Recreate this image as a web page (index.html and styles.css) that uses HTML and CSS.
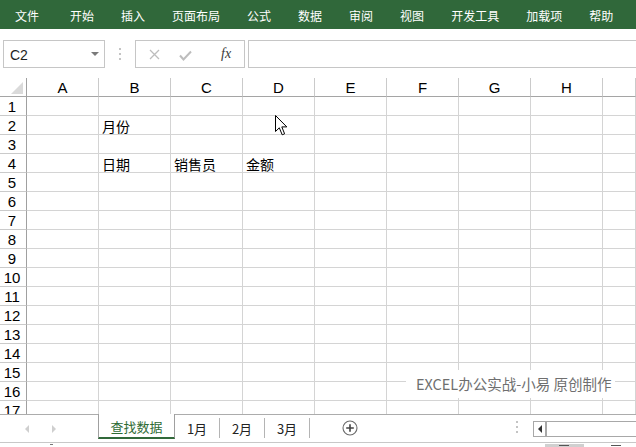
FILE: index.html
```html
<!DOCTYPE html>
<html lang="zh-CN">
<head>
<meta charset="utf-8">
<title>Excel</title>
<link rel="stylesheet" href="styles.css">
</head>
<body>
<div class="app">
  <nav class="ribbon">
    <span>文件</span><span>开始</span><span>插入</span><span>页面布局</span><span>公式</span><span>数据</span><span>审阅</span><span>视图</span><span>开发工具</span><span>加载项</span><span>帮助</span>
  </nav>

  <div class="fbar">
    <div class="namebox"><span>C2</span><span class="caret"></span></div>
    <div class="vdots"><i></i><i></i><i></i></div>
    <div class="fnbox">
      <svg class="x-ico" width="11" height="11" viewBox="0 0 11 11"><path d="M1 1L10 10M10 1L1 10" stroke="#bdbdbd" stroke-width="1.3" fill="none"/></svg>
      <svg class="ok-ico" width="13" height="11" viewBox="0 0 13 11"><path d="M1 5.5L4.5 9.5L12 1.5" stroke="#bdbdbd" stroke-width="2" fill="none"/></svg>
      <span class="fx">fx</span>
    </div>
    <div class="finput"></div>
  </div>

  <div class="sheet">
    <div class="grid">
      <span class="corner"><i></i></span><span class="ch">A</span><span class="ch">B</span><span class="ch">C</span><span class="ch">D</span><span class="ch">E</span><span class="ch">F</span><span class="ch">G</span><span class="ch">H</span><span class="ch"></span>
      <span class="rn">1</span><span></span><span></span><span></span><span></span><span></span><span></span><span></span><span></span><span></span>
      <span class="rn">2</span><span></span><span>月份</span><span></span><span></span><span></span><span></span><span></span><span></span><span></span>
      <span class="rn">3</span><span></span><span></span><span></span><span></span><span></span><span></span><span></span><span></span><span></span>
      <span class="rn">4</span><span></span><span>日期</span><span>销售员</span><span>金额</span><span></span><span></span><span></span><span></span><span></span>
      <span class="rn">5</span><span></span><span></span><span></span><span></span><span></span><span></span><span></span><span></span><span></span>
      <span class="rn">6</span><span></span><span></span><span></span><span></span><span></span><span></span><span></span><span></span><span></span>
      <span class="rn">7</span><span></span><span></span><span></span><span></span><span></span><span></span><span></span><span></span><span></span>
      <span class="rn">8</span><span></span><span></span><span></span><span></span><span></span><span></span><span></span><span></span><span></span>
      <span class="rn">9</span><span></span><span></span><span></span><span></span><span></span><span></span><span></span><span></span><span></span>
      <span class="rn">10</span><span></span><span></span><span></span><span></span><span></span><span></span><span></span><span></span><span></span>
      <span class="rn">11</span><span></span><span></span><span></span><span></span><span></span><span></span><span></span><span></span><span></span>
      <span class="rn">12</span><span></span><span></span><span></span><span></span><span></span><span></span><span></span><span></span><span></span>
      <span class="rn">13</span><span></span><span></span><span></span><span></span><span></span><span></span><span></span><span></span><span></span>
      <span class="rn">14</span><span></span><span></span><span></span><span></span><span></span><span></span><span></span><span></span><span></span>
      <span class="rn">15</span><span></span><span></span><span></span><span></span><span></span><span></span><span></span><span></span><span></span>
      <span class="rn">16</span><span></span><span></span><span></span><span></span><span></span><span></span><span></span><span></span><span></span>
      <span class="rn">17</span><span></span><span></span><span></span><span></span><span></span><span></span><span></span><span></span><span></span>
    </div>
    <div class="watermark">EXCEL办公实战-小易 原创制作</div>
    <svg class="cursor" width="13" height="21" viewBox="0 0 13 21"><path d="M0.5 0.5L0.5 16.5L4.3 12.8L7.2 19.8L9.6 18.8L6.8 11.9L11.8 11.9Z" fill="#fff" stroke="#000" stroke-width="1"/></svg>
  </div>

  <div class="tabs">
    <div class="nav"><span class="tri-l"></span><span class="tri-r"></span></div>
    <div class="tab active">查找数据</div>
    <div class="tab">1月</div>
    <div class="tab">2月</div>
    <div class="tab">3月</div>
    <div class="addbtn">
      <svg width="16" height="16" viewBox="0 0 16 16"><circle cx="8" cy="8" r="7" fill="none" stroke="#6b6b6b" stroke-width="1.1"/><path d="M8 4.2V11.8M4.2 8H11.8" stroke="#444" stroke-width="1.6"/></svg>
    </div>
    <div class="hdots"><i></i><i></i><i></i></div>
    <div class="hscroll"><span class="lbtn"><span class="tri-s"></span></span><span class="thumb"></span></div>
  </div>

  <div class="status">
    <span class="mark1"></span>
    <span class="view sel"><i></i></span>
    <span class="view"><i></i></span>
  </div>
</div>
</body>
</html>
```
FILE: styles.css
```css
* { box-sizing: border-box; margin: 0; padding: 0; }
html, body { width: 636px; height: 447px; overflow: hidden; background: #fff; }
body { font-family: "Liberation Sans", Arial, sans-serif; color: #000; }

.app { width: 636px; height: 447px; display: flex; flex-direction: column; }

/* ribbon */
.ribbon {
  height: 29px; flex: none; background: #30683a;
  display: flex; align-items: center; gap: 27px; padding: 1px 0 0 15px;
  font-family: "Noto Sans CJK SC", "Liberation Sans", sans-serif;
  font-size: 12px; color: #fff; white-space: nowrap;
}
.ribbon span:first-child { margin-right: 4px; }

/* formula bar */
.fbar { height: 49px; flex: none; display: flex; align-items: flex-start; padding-top: 11px; }
.namebox {
  margin-left: 3px; width: 102px; height: 28px; border: 1px solid #c6c6c6;
  display: flex; align-items: center; justify-content: space-between;
  padding: 1px 5px 0 6px; font-size: 14px; color: #1e1e1e;
}
.caret { width: 0; height: 0; border-left: 4px solid transparent; border-right: 4px solid transparent; border-top: 4px solid #7a7a7a; margin-top: -2px; }
.vdots { margin-left: 14px; width: 3px; height: 28px; display: flex; flex-direction: column; justify-content: center; gap: 3px; }
.vdots i { display: block; width: 2px; height: 2px; background: #c4c4c4; }
.fnbox {
  margin-left: 13px; width: 110px; height: 28px; border: 1px solid #c6c6c6;
  display: flex; align-items: center; padding-left: 12px;
}
.x-ico { margin-left: 1px; }
.ok-ico { margin-left: 19px; margin-top: 2px; }
.fx { margin-left: 29px; font-family: "Liberation Serif", serif; font-style: italic; font-size: 14px; color: #3a3a3a; margin-top: 0; }
.finput { margin-left: 3px; flex: 1; height: 28px; border: 1px solid #c6c6c6; border-right: none; }

/* sheet */
.sheet { position: relative; height: 336px; flex: none; overflow: hidden; }
.grid {
  display: grid;
  grid-template-columns: 27px repeat(8, 72px) 1fr;
  grid-auto-rows: 19px;
}
.grid > span {
  border-right: 1px solid #d4d4d4; border-bottom: 1px solid #d4d4d4;
  font-family: "Noto Sans CJK SC", "Liberation Sans", sans-serif;
  font-size: 14px; line-height: 18px; padding: 1px 0 0 3px;
  white-space: nowrap; overflow: hidden; color: #000;
}
.grid > .rn {
  border-right-color: #a0a0a0; border-bottom-color: #cacaca;
  text-align: center; padding: 1px 2px 0 0;
  font-family: "Liberation Sans", Arial, sans-serif; font-size: 15px;
}
.grid > .ch {
  border-right-color: #cacaca; border-bottom-color: #a5a5a5;
  text-align: center; padding: 1px 0 0 0;
  font-family: "Liberation Sans", Arial, sans-serif; font-size: 15px;
}
.grid > .corner { border-right-color: #a0a0a0; border-bottom-color: #a5a5a5; position: relative; padding: 0; }
.corner i {
  position: absolute; right: 3px; bottom: 2px; width: 0; height: 0;
  border-left: 12px solid transparent; border-bottom: 12px solid #dadada;
}

.watermark {
  position: absolute; left: 406px; top: 292px; width: 209px; height: 28px;
  background: #fff; padding: 4px 0 0 10px;
  font-family: "Noto Sans CJK SC", "Liberation Sans", sans-serif;
  font-size: 14.5px; line-height: 20px; color: #6f6f6f; white-space: nowrap;
}
.cursor { position: absolute; left: 275px; top: 37px; }

/* sheet tabs */
.tabs {
  height: 29px; flex: none; border-top: 1px solid #acacac; border-bottom: 1px solid #c8c8c8;
  display: flex; align-items: flex-start;
  font-family: "Noto Sans CJK SC", "Liberation Sans", sans-serif; font-size: 13px;
}
.nav { width: 98px; height: 27px; display: flex; align-items: center; padding-left: 25px; gap: 23px; }
.tri-l { width: 0; height: 0; border-top: 4px solid transparent; border-bottom: 4px solid transparent; border-right: 4px solid #cfcfcf; }
.tri-r { width: 0; height: 0; border-top: 4px solid transparent; border-bottom: 4px solid transparent; border-left: 4px solid #cfcfcf; }
.tab {
  width: 45px; height: 20px; margin-top: 3px; border-right: 1px solid #b4b4b4;
  display: flex; align-items: center; justify-content: center; color: #222;
}
.tab.active {
  width: 77px; height: 25px; margin-top: -1px; background: #fff;
  border-left: 1px solid #a0a0a0; border-right: 1px solid #a0a0a0; border-bottom: 2px solid #31693a;
  color: #2e6b34; padding-top: 1px;
}
.addbtn { margin-left: 32px; margin-top: 5px; width: 16px; height: 16px; }
.addbtn svg { display: block; }
.hdots { margin-left: 158px; margin-top: 6px; display: flex; flex-direction: column; gap: 3px; }
.hdots i { display: block; width: 2px; height: 2px; background: #c4c4c4; }
.hscroll {
  margin-left: 15px; margin-top: 6px; flex: 1; height: 16px;
  border: 1px solid #a8a8a8; border-right: none; display: flex;
}
.lbtn { width: 13px; height: 14px; display: flex; align-items: center; justify-content: center; border-right: 2px solid #a8a8a8; }
.tri-s { width: 0; height: 0; border-top: 4px solid transparent; border-bottom: 4px solid transparent; border-right: 4px solid #333; }
.thumb { flex: 1; }

/* status strip */
.status { flex: 1; display: flex; align-items: flex-end; position: relative; }
.mark1 { width: 3px; height: 1px; background: #777; margin: 0 0 2px 50px; }
.view { width: 40px; height: 3px; display: flex; justify-content: center; }
.view i { display: block; width: 10px; height: 1px; background: #555; margin-top: 1px; }
.view.sel { background: #d0d0d0; margin-left: 492px; }
.view + .view { margin-left: 13px; }
```
